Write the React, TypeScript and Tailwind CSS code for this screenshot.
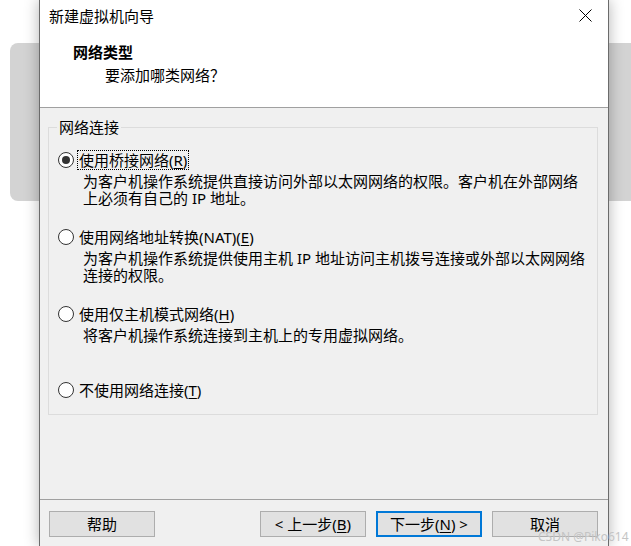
import React from "react";

const font = { fontFamily: '"Noto Sans", "Noto Sans CJK SC", sans-serif' };

function Radio({ checked }: { checked?: boolean }) {
  return (
    <span className="flex h-[16px] w-[16px] shrink-0 items-center justify-center rounded-full border border-[#333] bg-white">
      {checked && <span className="h-[8px] w-[8px] rounded-full bg-[#333]" />}
    </span>
  );
}

function Key({ k }: { k: string }) {
  return <span className="underline underline-offset-2">{k}</span>;
}

function Option({
  checked,
  focused,
  label,
  desc,
}: {
  checked?: boolean;
  focused?: boolean;
  label: React.ReactNode;
  desc?: string[];
}) {
  return (
    <div className="flex flex-col">
      <div className="flex h-[20px] items-center">
        <Radio checked={checked} />
        <span
          className={
            "ml-[3px] leading-[18px] " +
            (focused ? "border border-dotted border-black px-[1px]" : "border border-transparent px-[1px]")
          }
        >
          {label}
        </span>
      </div>
      {desc && (
        <div className="mt-[3px] pl-[25px] leading-[17px]">
          {desc.map((d) => (
            <div key={d}>{d}</div>
          ))}
        </div>
      )}
    </div>
  );
}

function Btn({ children, primary }: { children: React.ReactNode; primary?: boolean }) {
  return (
    <div
      className={
        "flex h-[26px] w-[106px] items-center justify-center bg-[#e1e1e1] " +
        (primary ? "border-2 border-[#0078d7]" : "border border-[#adadad]")
      }
    >
      {children}
    </div>
  );
}

export default function App() {
  return (
    <div className="relative h-[546px] w-[631px] overflow-hidden bg-white text-[15px] text-black" style={font}>
      {/* window behind the dialog */}
      <div className="absolute left-[10px] top-[43px] h-[158px] w-[640px] rounded-[8px] bg-[#d3d3d3]" />

      <div className="relative ml-[39px] flex h-[546px] w-[570px] flex-col border-x border-[#6b6b6b] bg-[#f0f0f0] shadow-[0_0_14px_rgba(0,0,0,0.3)]">
        {/* title + header */}
        <div className="h-[108px] border-b border-[#a0a0a0] bg-white">
          <div className="flex h-[33px] items-center justify-between pl-[9px] pr-[16px]">
            <span>新建虚拟机向导</span>
            <svg width="13" height="13" viewBox="0 0 13 13" className="mt-[-2px]">
              <path d="M0.5 0.5 L12.5 12.5 M12.5 0.5 L0.5 12.5" stroke="#000" strokeWidth="1" />
            </svg>
          </div>
          <div className="pl-[33px] pt-[9px] font-bold leading-[20px]">网络类型</div>
          <div className="pl-[65px] pt-[3px] leading-[20px]">要添加哪类网络？</div>
        </div>

        {/* body */}
        <div className="h-[391px] pt-[19px]">
          <div className="relative ml-[8px] h-[288px] w-[550px] border border-[#dcdcdc] pl-[9px] pt-[22px]">
            <span className="absolute left-[8px] top-[-11px] bg-[#f0f0f0] px-[2px] leading-[20px]">网络连接</span>
            <Option
              checked
              focused
              label={
                <>
                  使用桥接网络(<Key k="R" />)
                </>
              }
              desc={["为客户机操作系统提供直接访问外部以太网网络的权限。客户机在外部网络", "上必须有自己的 IP 地址。"]}
            />
            <div className="h-[20px]" />
            <Option
              label={
                <>
                  使用网络地址转换(NAT)(<Key k="E" />)
                </>
              }
              desc={["为客户机操作系统提供使用主机 IP 地址访问主机拨号连接或外部以太网网络", "连接的权限。"]}
            />
            <div className="h-[20px]" />
            <Option
              label={
                <>
                  使用仅主机模式网络(<Key k="H" />)
                </>
              }
              desc={["将客户机操作系统连接到主机上的专用虚拟网络。"]}
            />
            <div className="h-[36px]" />
            <Option
              label={
                <>
                  不使用网络连接(<Key k="T" />)
                </>
              }
            />
          </div>
        </div>

        {/* buttons */}
        <div className="flex border-t border-[#a0a0a0] pl-[9px] pt-[11px]">
          <Btn>帮助</Btn>
          <div className="ml-[105px] flex gap-[10px]">
            <Btn>
              &lt; 上一步(<Key k="B" />)
            </Btn>
            <Btn primary>
              下一步(<Key k="N" />) &gt;
            </Btn>
            <Btn>取消</Btn>
          </div>
        </div>
      </div>

      <span className="absolute left-[538px] top-[530px] whitespace-nowrap text-[12px] leading-[14px] text-[#c4c4c4]">
        CSDN @Piko614
      </span>
    </div>
  );
}
